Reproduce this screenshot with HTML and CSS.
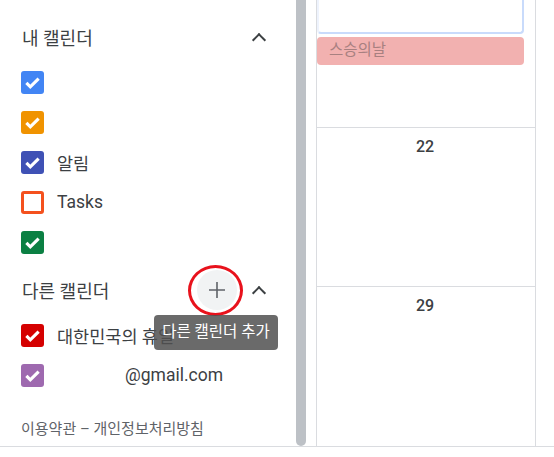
FILE: index.html
```html
<!DOCTYPE html>
<html lang="ko">
<head>
    <meta charset="UTF-8">
    <title>캘린더</title>
    <link rel="stylesheet" href="styles.css">
</head>
<body>
    <div class="page">
        <div class="sidebar">
            <div class="section-head">
                <span>내 캘린더</span>
                <span class="chevron"></span>
            </div>
            <div class="cal-row"><span class="box blue"><svg viewBox="0 0 24 24"><path d="M5 12.5l4.5 4.5L19 7.5" /></svg></span></div>
            <div class="cal-row"><span class="box orange"><svg viewBox="0 0 24 24"><path d="M5 12.5l4.5 4.5L19 7.5" /></svg></span></div>
            <div class="cal-row"><span class="box indigo"><svg viewBox="0 0 24 24"><path d="M5 12.5l4.5 4.5L19 7.5" /></svg></span><span class="label">알림</span></div>
            <div class="cal-row"><span class="box empty"></span><span class="label">Tasks</span></div>
            <div class="cal-row"><span class="box green"><svg viewBox="0 0 24 24"><path d="M5 12.5l4.5 4.5L19 7.5" /></svg></span></div>

            <div class="section-head other">
                <span>다른 캘린더</span>
                <span class="add-btn">
                    <svg viewBox="0 0 24 24"><path d="M12 4v16M4 12h16" /></svg>
                </span>
                <span class="chevron"></span>
                <span class="marker"></span>
                <span class="tooltip">다른 캘린더 추가</span>
            </div>
            <div class="cal-row"><span class="box red"><svg viewBox="0 0 24 24"><path d="M5 12.5l4.5 4.5L19 7.5" /></svg></span><span class="label">대한민국의 휴일</span></div>
            <div class="cal-row"><span class="box purple"><svg viewBox="0 0 24 24"><path d="M5 12.5l4.5 4.5L19 7.5" /></svg></span><span class="label mail">@gmail.com</span></div>

            <div class="footer">이용약관 – 개인정보처리방침</div>
        </div>
        <div class="scrollbar"></div>
        <div class="month">
            <div class="cell first">
                <div class="event-open"></div>
                <div class="event">스승의날</div>
            </div>
            <div class="cell">
                <div class="day">22</div>
            </div>
            <div class="cell">
                <div class="day">29</div>
            </div>
        </div>
    </div>
</body>
</html>
```

FILE: styles.css
```css
body {
    margin: 0;
    background-color: #fff;
    font-family: Roboto, "Noto Sans CJK KR", sans-serif;
    color: #3c4043;
    overflow: hidden;
}
.page {
    display: flex;
    height: 446px;
    border-bottom: 1px solid #dadce0;
}
.sidebar {
    width: 296px;
    padding: 13px 0 0 21px;
    box-sizing: border-box;
    display: flex;
    flex-direction: column;
}
.section-head {
    position: relative;
    height: 48px;
    display: flex;
    align-items: center;
    font-size: 18px;
    padding-left: 1px;
    margin-bottom: 1px;
}
.section-head > span:first-child {
    flex: 1;
}
.section-head.other {
    margin-top: 4px;
}
.chevron {
    width: 8px;
    height: 8px;
    border-top: 2px solid #3c4043;
    border-left: 2px solid #3c4043;
    transform: rotate(45deg);
    margin: 6px 32px 0 0;
}
.add-btn {
    width: 40px;
    height: 40px;
    border-radius: 50%;
    background-color: #f1f3f4;
    display: flex;
    justify-content: center;
    align-items: center;
    margin-right: 17px;
}
.add-btn svg {
    width: 24px;
    height: 24px;
    fill: none;
    stroke: #5f6368;
    stroke-width: 1.6;
}
.marker {
    position: absolute;
    left: 167px;
    top: -1px;
    width: 49px;
    height: 45px;
    border: 3px solid #e8121c;
    border-radius: 50%;
}
.tooltip {
    position: absolute;
    left: 133px;
    top: 49px;
    width: 124px;
    height: 35px;
    line-height: 35px;
    text-align: center;
    font-size: 15.5px;
    color: #fff;
    background-color: rgba(80, 80, 80, 0.85);
    border-radius: 4px;
    z-index: 2;
}
.cal-row {
    height: 40px;
    display: flex;
    align-items: center;
    font-size: 17.5px;
}
.box {
    width: 23px;
    height: 23px;
    border-radius: 3px;
    box-sizing: border-box;
    display: flex;
    justify-content: center;
    align-items: center;
}
.box svg {
    width: 21px;
    height: 21px;
    fill: none;
    stroke: #fff;
    stroke-width: 3.6;
}
.blue { background-color: #4285f4; }
.orange { background-color: #f09300; }
.indigo { background-color: #3f51b5; }
.green { background-color: #0b8043; }
.red { background-color: #d50000; }
.purple { background-color: #9e69af; }
.empty {
    border: 3px solid #f4511e;
}
.label {
    margin-left: 13px;
}
.label.mail {
    margin-left: 81px;
}
.footer {
    margin-top: 22px;
    font-size: 15px;
    color: #5f6368;
}
.scrollbar {
    width: 10px;
    background-color: #bdc1c6;
    border-radius: 0 0 5px 5px;
}
.month {
    margin-left: 10px;
    width: 218px;
    border-left: 1px solid #dadce0;
    border-right: 1px solid #dadce0;
    display: flex;
    flex-direction: column;
}
.cell {
    height: 159px;
    border-top: 1px solid #dadce0;
}
.cell.first {
    height: 127px;
    border-top: none;
}
.day {
    text-align: center;
    font-size: 16px;
    font-weight: 500;
    margin-top: 9px;
    margin-right: 2px;
}
.event-open {
    height: 34px;
    width: 207px;
    box-sizing: border-box;
    border: 2px solid #c9dbfb;
    border-top: none;
    border-left-color: #eef3fd;
    border-radius: 0 0 4px 4px;
}
.event {
    width: 207px;
    height: 28px;
    margin-top: 3px;
    border-radius: 4px;
    background-color: #f2b1b0;
    color: #a88080;
    font-size: 15.5px;
    line-height: 27px;
    padding-left: 12px;
    box-sizing: border-box;
}
```
